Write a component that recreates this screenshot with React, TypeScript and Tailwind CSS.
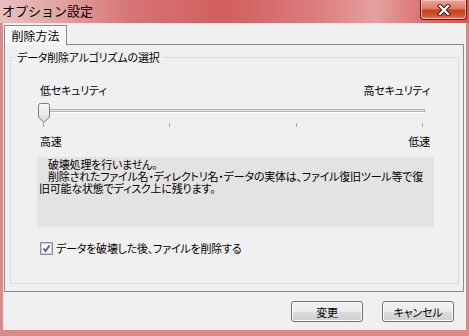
import React from "react";

const jp = "font-['Noto_Sans_CJK_JP','Noto_Sans',sans-serif]";

function CloseButton() {
  return (
    <button className="mr-[2px] flex h-[20px] w-[47px] items-center justify-center rounded-b-[4px] border border-t-0 border-[#5e1e16] bg-[linear-gradient(180deg,#eba595_0%,#dd7a66_45%,#c6401f_55%,#d35a38_85%,#e8866a_100%)] shadow-[inset_0_0_0_1px_rgba(255,220,210,0.6)]">
      <svg width="14" height="12" viewBox="0 0 14 12">
        <path
          d="M3 2 L11 10 M11 2 L3 10"
          stroke="#3a1a16"
          strokeWidth="4.2"
          strokeLinecap="square"
        />
        <path
          d="M3 2 L11 10 M11 2 L3 10"
          stroke="#ffffff"
          strokeWidth="2.2"
          strokeLinecap="square"
        />
      </svg>
    </button>
  );
}

function Thumb() {
  return (
    <svg width="12" height="20" viewBox="0 0 12 20">
      <defs>
        <linearGradient id="tg" x1="0" y1="0" x2="0" y2="1">
          <stop offset="0" stopColor="#fbfbfb" />
          <stop offset="1" stopColor="#d9d9d9" />
        </linearGradient>
      </defs>
      <path
        d="M0.5 2.5 Q0.5 0.5 2.5 0.5 H9.5 Q11.5 0.5 11.5 2.5 V14 L6 19.5 L0.5 14 Z"
        fill="url(#tg)"
        stroke="#7a7a7a"
      />
    </svg>
  );
}

function CheckBox() {
  return (
    <div className="flex h-[13px] w-[13px] shrink-0 items-center justify-center border border-[#8e8f8f] bg-[linear-gradient(135deg,#dcdcdc,#ffffff)]">
      <svg width="11" height="11" viewBox="0 0 11 11">
        <rect x="0.5" y="0.5" width="10" height="10" fill="#f4f6f8" stroke="#c9ced5" />
        <path d="M2.5 5.5 L4.5 8 L8.5 2.5" stroke="#4a5d94" strokeWidth="1.8" fill="none" />
      </svg>
    </div>
  );
}

function WinButton({ label }: { label: string }) {
  return (
    <button className="flex h-[21px] w-[72px] items-center justify-center rounded-[3px] border border-[#707070] bg-[linear-gradient(180deg,#f2f2f2_0%,#ebebeb_50%,#dddddd_51%,#cfcfcf_100%)] text-[11px] leading-[14px] tracking-[-0.2px] text-black shadow-[inset_0_0_0_1px_#fcfcfc]">
      {label}
    </button>
  );
}

export default function App() {
  return (
    <div
      className={`${jp} flex h-[336px] w-[469px] flex-col bg-[#d98b8b] text-black`}
    >
      {/* title bar */}
      <div className="flex h-[23px] items-start bg-[linear-gradient(90deg,#e9c0bf_0%,#e2a5a4_12%,#d67474_28%,#d25e5e_48%,#dc7f7f_68%,#e5a0a0_80%,#d86a6a_92%,#d25a5a_100%)]">
        <span className="pl-[2px] pt-[3px] text-[13px] leading-[16px] text-black">
          オプション設定
        </span>
        <div className="ml-auto">
          <CloseButton />
        </div>
      </div>

      {/* client */}
      <div className="mx-[3px] mb-[6px] flex flex-1 flex-col border-l border-[#f7e9e9] bg-[#f0f0f0] text-[11px] leading-[14px] tracking-[-0.2px] [font-feature-settings:'palt']">
        {/* tabs */}
        <div className="flex pt-[2px]">
          <div className="relative z-10 -mb-[1px] flex h-[20px] w-[63px] items-center justify-center border border-b-0 border-[#898c95] bg-[#f7f7f7] text-[12px] tracking-normal">
            削除方法
          </div>
        </div>

        {/* tab panel */}
        <div className="mr-[2px] h-[248px] border border-[#898c95] bg-[#f0f0f0] px-[5px] pt-[5px]">
          <fieldset className="h-[234px] w-[449px] min-w-0 border border-[#d5dfe5]">
            <legend className="ml-[4px] px-[2px] leading-[14px]">
              データ削除アルゴリズムの選択
            </legend>
            <div className="flex flex-col pl-[29px] pr-[28px] pt-[19px]">
              <div className="flex justify-between">
                <span>低セキュリティ</span>
                <span>高セキュリティ</span>
              </div>

              {/* slider */}
              <div className="relative mt-[6px] h-[20px]">
                <div className="absolute left-[3px] right-[5px] top-[6px] h-[3px] border border-[#b4b4b4] bg-[#e6e6e6] shadow-[0_1px_0_#ffffff]" />
                <div className="absolute -left-[2px] top-0">
                  <Thumb />
                </div>
              </div>
              <div className="ml-[3px] mr-[7px] flex h-[4px] justify-between">
                <span className="w-px bg-[#a8a8a8]" />
                <span className="w-px bg-[#a8a8a8]" />
                <span className="w-px bg-[#a8a8a8]" />
                <span className="w-px bg-[#a8a8a8]" />
              </div>

              <div className="mt-[7px] flex justify-between">
                <span>高速</span>
                <span>低速</span>
              </div>

              {/* description */}
              <div className="-ml-[3px] -mr-[4px] mt-[9px] h-[70px] bg-[#e3e3e3] pl-[2px] pt-[1px] leading-[12px] whitespace-nowrap">
                <div className="pl-[9px]">破壊処理を行いません。</div>
                <div className="pl-[9px]">
                  削除されたファイル名・ディレクトリ名・データの実体は、ファイル復旧ツール等で復
                </div>
                <div>旧可能な状態でディスク上に残ります。</div>
              </div>

              <div className="mt-[14px] flex items-center gap-[3px]">
                <CheckBox />
                <span>データを破壊した後、ファイルを削除する</span>
              </div>
            </div>
          </fieldset>
        </div>

        {/* buttons */}
        <div className="mt-[9px] flex justify-end gap-[19px] pr-[12px]">
          <WinButton label="変更" />
          <WinButton label="キャンセル" />
        </div>
      </div>
    </div>
  );
}
